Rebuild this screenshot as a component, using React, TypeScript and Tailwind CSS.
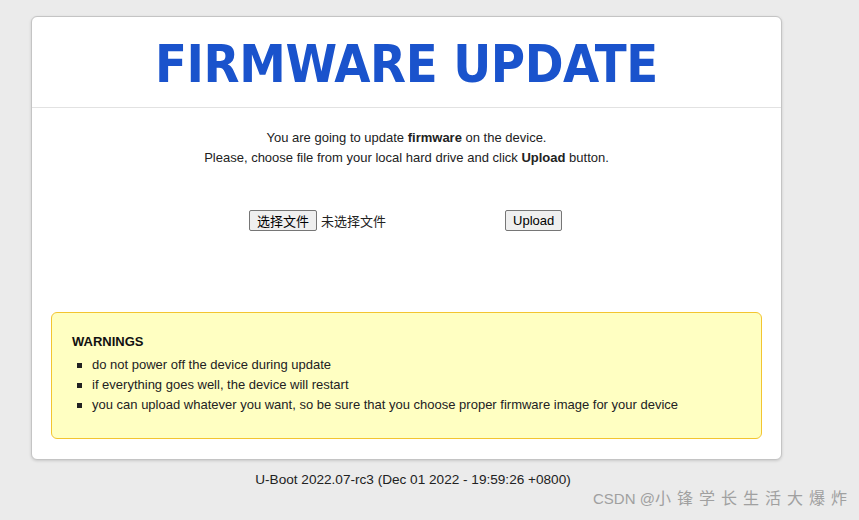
import React from "react";

const warnings = [
  "do not power off the device during update",
  "if everything goes well, the device will restart",
  "you can upload whatever you want, so be sure that you choose proper firmware image for your device",
];

const btn =
  "h-[21px] rounded-[2px] border border-[#767676] bg-[#efefef] px-[7px] text-[13px] leading-none text-black";

const App = () => {
  return (
    <div className="relative h-[520px] w-[859px] overflow-hidden bg-[#ebebeb] font-['Liberation_Sans','Noto_Sans_CJK_SC',sans-serif] text-[13px] text-[#222]">
      <div className="pl-[31px] pt-[16px]">
        <div className="w-[751px] rounded-[6px] border border-[#c4c4c4] bg-white shadow-[0_1px_3px_rgba(0,0,0,0.15)]">
          <div className="flex h-[91px] items-center justify-center border-b border-[#e2e2e2] pt-[3px]">
            <h1 className="font-['DejaVu_Sans_Condensed','DejaVu_Sans',sans-serif] text-[52px] font-bold leading-none tracking-[-0.4px] text-[#1a53cc]">
              FIRMWARE UPDATE
            </h1>
          </div>

          <div className="px-[19px] pb-[20px]">
            <div className="pt-[20px] text-center leading-[20px]">
              <p>
                You are going to update <b>firmware</b> on the device.
              </p>
              <p>
                Please, choose file from your local hard drive and click <b>Upload</b> button.
              </p>
            </div>

            <div className="mt-[42px] flex h-[21px] items-center pl-[198px]">
              <button className={`${btn} font-['Noto_Sans_CJK_SC',sans-serif]`}>选择文件</button>
              <span className="ml-[4px] w-[184px] font-['Noto_Sans_CJK_SC',sans-serif] text-[13px]">未选择文件</span>
              <button className={btn}>Upload</button>
            </div>

            <div className="mt-[81px] h-[127px] rounded-[6px] border border-[#f3c530] bg-[#ffffc2] pl-[20px] pt-[21px]">
              <h3 className="text-[13px] font-bold leading-[16px] text-[#111]">WARNINGS</h3>
              <ul className="mt-[5px] leading-[20px]">
                {warnings.map((w) => (
                  <li key={w} className="flex items-center">
                    <span className="ml-[5px] mr-[10px] h-[5px] w-[5px] bg-[#222]" />
                    {w}
                  </li>
                ))}
              </ul>
            </div>
          </div>
        </div>

        <div className="w-[764px] pt-[12px] text-center text-[13.6px] leading-[16px]">
          U-Boot 2022.07-rc3 (Dec 01 2022 - 19:59:26 +0800)
        </div>
      </div>

      {/* CSDN watermark */}
      <div className="absolute left-[593px] top-[488px] whitespace-nowrap text-[15px] leading-[22px] text-[#a0a0a0]">
        CSDN @<span className="text-[16px] tracking-[6px]">小锋学长生活大爆炸</span>
      </div>
    </div>
  );
};

export default App;
